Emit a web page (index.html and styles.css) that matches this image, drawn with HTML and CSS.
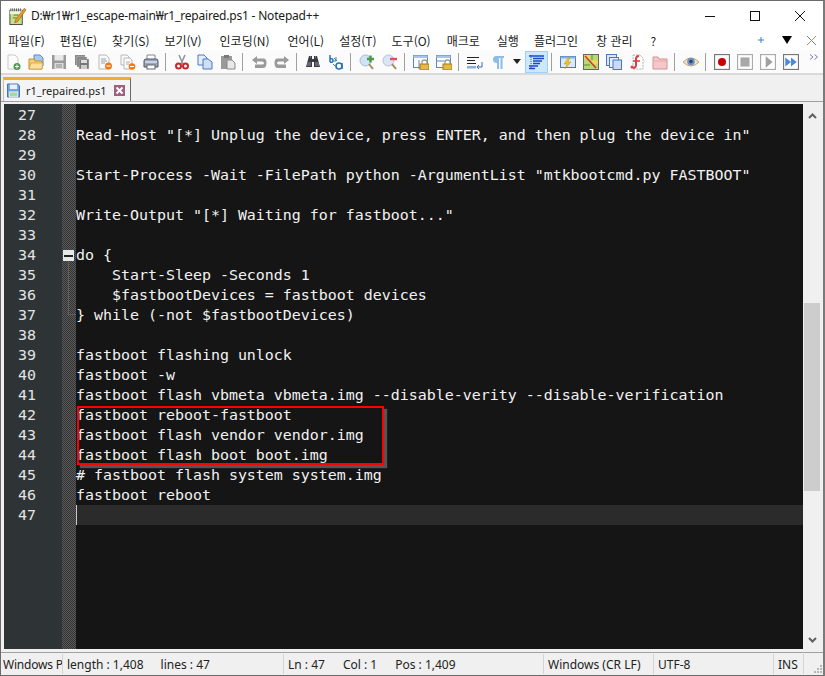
FILE: index.html
```html
<!DOCTYPE html>
<html lang="ko">
<head>
<meta charset="utf-8">
<title>r1_repaired.ps1 - Notepad++</title>
<link rel="stylesheet" href="styles.css">
</head>
<body>
<div class="win">
  <header class="titlebar">
    <svg class="appicon" viewBox="0 0 20 20"><rect x="2" y="4" width="13" height="15" fill="#c8e08c" stroke="#444"/><path d="M2 4h13v4H2z" fill="#eef5d8"/><path d="M3 2v3M5 2v3M7 2v3M9 2v3M11 2v3M13 2v3" stroke="#555"/><path d="M8 14 17 2l2 1.500L10 16l-3 1z" fill="#f0a020" stroke="#7a4a10" stroke-width=".6"/><path d="M6 9h5M5 12h4" stroke="#5a7a30"/></svg>
    <span class="title">D:₩r1₩r1_escape-main₩r1_repaired.ps1 - Notepad++</span>
    <div class="winctl">
      <svg viewBox="0 0 10 10"><path d="M0 5.500h10" stroke="#111"/></svg>
      <svg viewBox="0 0 10 10"><rect x=".5" y=".5" width="9" height="9" fill="none" stroke="#111"/></svg>
      <svg viewBox="0 0 10 10"><path d="M0 0l10 10M10 0 0 10" stroke="#111"/></svg>
    </div>
  </header>
  <nav class="menubar">
    <span>파일(F)</span><span>편집(E)</span><span>찾기(S)</span><span>보기(V)</span><span>인코딩(N)</span><span>언어(L)</span><span>설정(T)</span><span>도구(O)</span><span>매크로</span><span>실행</span><span>플러그인</span><span>창 관리</span><span>?</span>
    <div class="menuright">
      <svg viewBox="0 0 8 8"><path d="M4 1v6M1 4h6" stroke="#3a7fd0"/></svg>
      <svg viewBox="0 0 12 10"><path d="M1 1h10L6 9z" fill="#000"/></svg>
      <svg viewBox="0 0 11 11"><path d="M1 1l9 9" stroke="#4a90c8"/><path d="M10 1 1 10" stroke="#c88a50"/></svg>
    </div>
  </nav>
  <div class="toolbar">
    <button class="tb"><svg viewBox="0 0 16 16"><path d="M3 1h7l3 3v11H3z" fill="#fbfbfb" stroke="#c8c8c8"/><circle cx="12" cy="12.500" r="3.500" fill="#4a9a50"/><path d="M12 10.500v4M10 12.500h4" stroke="#fff"/></svg></button>
    <button class="tb"><svg viewBox="0 0 16 16"><path d="M6 1h6l3 3v8H6z" fill="#a8c8ee" stroke="#5a88c8"/><path d="M1 5h5l1 2h7v8H1z" fill="#f8d070" stroke="#c09030"/><path d="M1 15l2-6h12l-1 6z" fill="#fbe09a" stroke="#c09030" stroke-width=".6"/></svg></button>
    <button class="tb"><svg viewBox="0 0 16 16"><rect x="1" y="1" width="14" height="14" fill="#9a9a9a"/><rect x="3.500" y="1" width="9" height="5.500" fill="#e8e8e8"/><rect x="3.500" y="9" width="9" height="6" fill="#dcdcdc"/><path d="M5 11h6M5 13h6" stroke="#888"/></svg></button>
    <button class="tb"><svg viewBox="0 0 16 16"><rect x="1" y="1" width="10" height="10" fill="#8a8a8a"/><rect x="3" y="3" width="10" height="10" fill="#6e6e6e" stroke="#ddd" stroke-width=".5"/><rect x="5" y="5" width="10" height="10" fill="#777" stroke="#ddd" stroke-width=".5"/><rect x="7" y="6" width="6" height="3" fill="#ddd"/><rect x="7" y="11" width="6" height="4" fill="#ccc"/></svg></button>
    <button class="tb"><svg viewBox="0 0 16 16"><path d="M2 1h7l3 3v11H2z" fill="#fafafa" stroke="#b8b8b8"/><path d="M4 5h5M4 7h6M4 9h4" stroke="#a0a0a0"/><circle cx="11.500" cy="12" r="3.500" fill="#f07818"/><path d="M9.500 12h4" stroke="#fff" stroke-width="1.200"/></svg></button>
    <button class="tb"><svg viewBox="0 0 16 16"><path d="M1 1h6l2 2v8H1z" fill="#fafafa" stroke="#b8b8b8"/><path d="M4 4h6l2 2v9H4z" fill="#fafafa" stroke="#b8b8b8"/><path d="M6 8h4M6 10h3" stroke="#b0b0b0"/><circle cx="12" cy="12.500" r="3.300" fill="#f07818"/><path d="M10 12.500h4" stroke="#fff" stroke-width="1.200"/></svg></button>
    <button class="tb"><svg viewBox="0 0 16 16"><path d="M4 1h8v5H4z" fill="#fff" stroke="#7a8aa0"/><path d="M1 7q0-2 2-2h10q2 0 2 2v6H1z" fill="#9aa8b8" stroke="#556"/><rect x="2" y="7" width="12" height="2" fill="#c8d4e4"/><rect x="4" y="11" width="8" height="4" fill="#fff" stroke="#667"/></svg></button>
    <i class="sep"></i>
    <button class="tb"><svg viewBox="0 0 16 16"><path d="M11 1 7 10M5 1l4 9" stroke="#8a94a4" stroke-width="1.500"/><circle cx="4.500" cy="12" r="2.500" fill="none" stroke="#c8282c" stroke-width="2"/><circle cx="11.500" cy="12" r="2.500" fill="none" stroke="#c8282c" stroke-width="2"/></svg></button>
    <button class="tb"><svg viewBox="0 0 16 16"><path d="M1 1h6l3 3v7H1z" fill="#e4eefa" stroke="#4a78c0"/><path d="M6 5h5l4 3v7H6z" fill="#cfe0f6" stroke="#4a78c0"/></svg></button>
    <button class="tb"><svg viewBox="0 0 16 16"><rect x="1" y="2" width="11" height="13" fill="#9a9a9a"/><rect x="4" y="1" width="5" height="3" fill="#777"/><path d="M7 6h5l3 3v6H7z" fill="#e8e8e8" stroke="#888"/></svg></button>
    <i class="sep"></i>
    <button class="tb"><svg viewBox="0 0 16 16"><path d="M6 2 1 6l5 4V7.500h5q2 0 2 1.500t-2 1.500H4V14h8q3.500 0 3.500-5T12 4.500H6z" fill="#9a9a9a"/></svg></button>
    <button class="tb"><svg viewBox="0 0 16 16"><path d="M10 2l5 4-5 4V7.500H5Q3 7.500 3 9t2 1.500h7V14H4q-3.500 0-3.500-5T4 4.500h6z" fill="#9a9a9a"/></svg></button>
    <i class="sep"></i>
    <button class="tb"><svg viewBox="0 0 16 16"><path d="M4 2h3v3h2V2h3l3 11H9V8H7v5H1z" fill="#3a3a44"/><rect x="2" y="8" width="4" height="4" fill="#667"/><rect x="10" y="8" width="4" height="4" fill="#667"/><path d="M5 3h1M10 3h1" stroke="#aab"/></svg></button>
    <button class="tb"><svg viewBox="0 0 16 16"><path d="M2 1v7M2 5q3-1 3 1.500T2 8" fill="none" stroke="#2a70c0" stroke-width="1.500"/><path d="M6 4l3 3M8 3v4H5" fill="none" stroke="#3a8a9a"/><circle cx="11" cy="12" r="3" fill="none" stroke="#2a70c0" stroke-width="1.600"/><path d="M14 9v6" stroke="#2a70c0" stroke-width="1.500"/><path d="M5 10l3 3" stroke="#3a8a9a"/></svg></button>
    <i class="sep"></i>
    <button class="tb"><svg viewBox="0 0 16 16"><circle cx="6.500" cy="6.500" r="5.500" fill="#cfe2f6" stroke="#a8bcd4"/><path d="M10 10l4 5" stroke="#a88858" stroke-width="2"/><path d="M11.500 1.500v7M8 5h7" stroke="#4a9a40" stroke-width="2.400"/></svg></button>
    <button class="tb"><svg viewBox="0 0 16 16"><circle cx="6.500" cy="6.500" r="5.500" fill="#d8e6f6" stroke="#b0c0d4"/><path d="M10 10l4 5" stroke="#a88858" stroke-width="2"/><path d="M8 5h7" stroke="#e84858" stroke-width="2.400"/></svg></button>
    <i class="sep"></i>
    <button class="tb"><svg viewBox="0 0 16 16"><rect x=".5" y="1.500" width="14" height="12" fill="#fff" stroke="#5a88c4"/><rect x=".5" y="1.500" width="14" height="2.500" fill="#a8c4e8"/><path d="M6 6v9" stroke="#5a88c4"/><rect x="7" y="10" width="9" height="6" fill="#e8b840" stroke="#a87820"/><path d="M9 10V8q0-2 2.500-2T14 8v2" fill="none" stroke="#998" stroke-width="1.300"/></svg></button>
    <button class="tb"><svg viewBox="0 0 16 16"><rect x=".5" y="1.500" width="14" height="12" fill="#fff" stroke="#5a88c4"/><rect x=".5" y="1.500" width="14" height="2.500" fill="#a8c4e8"/><path d="M.5 7h8" stroke="#5a88c4"/><rect x="7" y="10" width="9" height="6" fill="#e8b840" stroke="#a87820"/><path d="M9 10V8q0-2 2.500-2T14 8v2" fill="none" stroke="#998" stroke-width="1.300"/></svg></button>
    <i class="sep"></i>
    <button class="tb"><svg viewBox="0 0 16 16"><path d="M0 3.500h12M0 6.500h8" stroke="#222"/><path d="M0 9.500h9" stroke="#222"/><rect y="12" width="9" height="2.500" fill="#8ab0e0"/><path d="M15 8v5h-4" fill="none" stroke="#3a6ab0"/><path d="M12 11l-2 2 2 2" fill="none" stroke="#3a6ab0"/></svg></button>
    <button class="tb"><svg viewBox="0 0 16 16"><path d="M6 2h8v2h-1.500v11h-2V4H9v11H7V9Q3 9 3 5.500T6 2z" fill="#8cbce8"/></svg></button>
    <button class="tb drop"><svg viewBox="0 0 8 5"><path d="M0 0h8L4 5z" fill="#222"/></svg></button>
    <button class="tb on"><svg viewBox="0 0 16 16"><path d="M2 1v14" stroke="#e02020" stroke-dasharray="1 1"/><path d="M0 2h15M4 4.500h11M4 7h9M4 9.500h7M0 12h9M0 14.500h6" stroke="#1848c8" stroke-width="1.300"/></svg></button>
    <i class="sep"></i>
    <button class="tb"><svg viewBox="0 0 16 16"><rect x=".5" y="2.500" width="15" height="11" fill="#dceaf8" stroke="#4a78b8"/><rect x=".5" y="2.500" width="15" height="2" fill="#8ab0dc"/><path d="M8 4 4 10h3l-2 5 6-7H8l2-4z" fill="#f0c030" stroke="#b88a10" stroke-width=".4"/></svg></button>
    <button class="tb"><svg viewBox="0 0 16 16"><rect x=".5" y=".5" width="15" height="15" fill="#b8d870" stroke="#666"/><path d="M1 5h6V1H1zM9 10h6V6H9z" fill="#e8d860"/><path d="M2 2l11 12" stroke="#d83030" stroke-width="1.400"/><path d="M9 1v5M1 11h6" stroke="#5a8a40"/></svg></button>
    <button class="tb"><svg viewBox="0 0 16 16"><rect x=".5" y=".5" width="10" height="11" fill="#d8e8f8" stroke="#4a78c0"/><rect x="3.500" y="3.500" width="9" height="10" fill="#e8f0fa" stroke="#4a78c0"/><rect x="7" y="6" width="8.500" height="9.500" fill="#c8dcf4" stroke="#4a78c0"/></svg></button>
    <button class="tb"><svg viewBox="0 0 16 16"><path d="M4 1h7l3 3v11H4z" fill="#fff" stroke="#b0b0b0" stroke-dasharray="2 1"/><path d="M10 2Q7 2 7 5v6q0 3-3 3" fill="none" stroke="#d84048" stroke-width="2"/><path d="M4 7h7" stroke="#d84048" stroke-width="1.600"/><circle cx="3" cy="13" r="1.500" fill="#d84048"/></svg></button>
    <button class="tb"><svg viewBox="0 0 16 16"><path d="M1 3h5l1 2h8v10H1z" fill="#f4c8c8" stroke="#d49090"/><path d="M2 7h12" stroke="#e8a8a8"/></svg></button>
    <i class="sep"></i>
    <button class="tb"><svg viewBox="0 0 16 16"><path d="M0 8q8-8 16 0-8 8-16 0z" fill="#f0e4d0" stroke="#c8a070"/><circle cx="8" cy="7.500" r="3.800" fill="#6a90c8"/><circle cx="8" cy="7.500" r="1.700" fill="#33445a"/></svg></button>
    <i class="sep"></i>
    <button class="tb"><svg viewBox="0 0 14 14"><rect x=".5" y=".5" width="13" height="13" fill="#fff" stroke="#777"/><circle cx="7" cy="7" r="3.500" fill="#c80000"/></svg></button>
    <button class="tb"><svg viewBox="0 0 14 14"><rect x=".5" y=".5" width="13" height="13" fill="#fff" stroke="#aaa"/><rect x="3" y="3" width="8" height="8" fill="#a8a8a8"/></svg></button>
    <button class="tb"><svg viewBox="0 0 14 14"><rect x=".5" y=".5" width="13" height="13" fill="#fff" stroke="#aaa"/><path d="M5 2l6 5-6 5z" fill="#a0a0a0"/></svg></button>
    <button class="tb"><svg viewBox="0 0 14 14"><rect x=".5" y=".5" width="13" height="13" fill="#fff" stroke="#777"/><path d="M2 3l5 4-5 4zM7 3l5 4-5 4z" fill="#4a88e0"/></svg></button>
    <svg class="more" viewBox="0 0 9 6"><path d="M0 .5 3 3 0 5.500M4.500 .5l3 2.500-3 2.500" fill="none" stroke="#7878b8"/></svg>
  </div>
  <div class="tabbar">
    <div class="tab">
      <svg class="tabicon" viewBox="0 0 14 15"><path d="M.5.500h11l2 2v12H.5z" fill="#6aa0e0" stroke="#3a6ab0"/><rect x="3" y="1" width="8" height="5" fill="#e8f0fa"/><rect x="2.500" y="9" width="9" height="5.500" fill="#a8d8a0" stroke="#eef"/></svg>
      <span>r1_repaired.ps1</span>
      <svg class="tabclose" viewBox="0 0 11 11"><rect width="11" height="11" fill="#a06080"/><path d="M2.500 2.500l6 6M8.500 2.500l-6 6" stroke="#fff" stroke-width="2"/></svg>
    </div>
  </div>
  <main class="frame">
    <div class="editor">
      <div class="gutter">
        <div>27</div><div>28</div><div>29</div><div>30</div><div>31</div><div>32</div><div>33</div><div>34</div><div>35</div><div>36</div><div>37</div><div>38</div><div>39</div><div>40</div><div>41</div><div>42</div><div>43</div><div>44</div><div>45</div><div>46</div><div>47</div>
      </div>
      <div class="fold">
        <div class="foldbox"></div>
        <div class="foldline"></div>
      </div>
      <div class="code">
<div class="ln"> </div>
<div class="ln">Read-Host "[*] Unplug the device, press ENTER, and then plug the device in"</div>
<div class="ln"> </div>
<div class="ln">Start-Process -Wait -FilePath python -ArgumentList "mtkbootcmd.py FASTBOOT"</div>
<div class="ln"> </div>
<div class="ln">Write-Output "[*] Waiting for fastboot..."</div>
<div class="ln"> </div>
<div class="ln">do {</div>
<div class="ln">    Start-Sleep -Seconds 1</div>
<div class="ln">    $fastbootDevices = fastboot devices</div>
<div class="ln">} while (-not $fastbootDevices)</div>
<div class="ln"> </div>
<div class="ln">fastboot flashing unlock</div>
<div class="ln">fastboot -w</div>
<div class="ln">fastboot flash vbmeta vbmeta.img --disable-verity --disable-verification</div>
<div class="ln">fastboot reboot-fastboot</div>
<div class="ln">fastboot flash vendor vendor.img</div>
<div class="ln">fastboot flash boot boot.img</div>
<div class="ln"># fastboot flash system system.img</div>
<div class="ln">fastboot reboot</div>
<div class="ln current"> </div>
        <div class="redbox"></div>
      </div>
      <div class="scrollbar">
        <svg class="arrow" viewBox="0 0 9 6"><path d="M1 5l3.500-3.500L8 5" fill="none" stroke="#606060" stroke-width="2"/></svg>
        <div class="track"><div class="thumb"></div></div>
        <svg class="arrow" viewBox="0 0 9 6"><path d="M1 1l3.500 3.500L8 1" fill="none" stroke="#606060" stroke-width="2"/></svg>
      </div>
    </div>
  </main>
  <footer class="status">
    <div class="cell c-type">Windows P</div>
    <div class="cell c-len"><span>length : 1,408</span><span>lines : 47</span></div>
    <div class="cell c-pos"><span>Ln : 47</span><span>Col : 1</span><span>Pos : 1,409</span></div>
    <div class="cell c-eol">Windows (CR LF)</div>
    <div class="cell c-enc">UTF-8</div>
    <div class="cell c-ins">INS</div>
    <div class="cell c-grip"><svg viewBox="0 0 10 10"><path d="M7 1h2v2H7zM4 4h2v2H4zM7 4h2v2H7zM1 7h2v2H1zM4 7h2v2H4zM7 7h2v2H7z" fill="#b8b8b8"/></svg></div>
  </footer>
</div>
</body>
</html>
```
FILE: styles.css
```css
* { box-sizing: border-box; }
html, body { margin: 0; padding: 0; }
body {
  width: 825px;
  height: 676px;
  overflow: hidden;
  font-family: "Noto Sans", "Noto Sans CJK KR", sans-serif;
  font-size: 12px;
  color: #1a1a1a;
}
.win {
  width: 825px;
  height: 676px;
  display: flex;
  flex-direction: column;
  background: #fff;
  border-top: 1px solid #6a6a6a;
  border-left: 1px solid #6a6a6a;
  border-right: 2px solid #7a7a7a;
  overflow: hidden;
}
.titlebar {
  height: 29px;
  display: flex;
  align-items: center;
  padding-left: 7px;
  flex: none;
}
.appicon { width: 19px; height: 20px; margin-right: 4px; flex: none; }
.title { font-size: 12px; letter-spacing: -0.19px; }
.winctl {
  margin-left: auto;
  display: flex;
  gap: 35px;
  padding-right: 18px;
}
.winctl svg { width: 10px; height: 10px; }
.menubar {
  height: 20px;
  flex: none;
  display: flex;
  align-items: center;
  gap: 15px;
  padding-left: 7px;
  font-family: "Noto Sans CJK KR", sans-serif;
  font-size: 12px;
}
.menubar > span:nth-child(5) { margin-left: 3px; }
.menubar > span:nth-child(6) { margin-left: 3px; }
.menubar > span:nth-child(9) { margin-left: 1px; }
.menubar > span:nth-child(10) { margin-left: 2px; }
.menubar > span:nth-child(12) { margin-left: 3px; }
.menubar > span:nth-child(13) { margin-left: 3px; }
.menuright {
  margin-left: auto;
  display: flex;
  align-items: center;
  padding-right: 6px;
}
.menuright svg:nth-child(1) { width: 8px; height: 8px; margin-right: 16px; }
.menuright svg:nth-child(2) { width: 12px; height: 10px; margin-right: 13px; }
.menuright svg:nth-child(3) { width: 11px; height: 11px; }
.toolbar {
  height: 25px;
  flex: none;
  display: flex;
  align-items: center;
  padding-left: 0;
  background: #fbfbfb;
  border-bottom: 2px solid #d9d9d9;
}
.tb {
  width: 23px;
  height: 22px;
  padding: 0;
  border: 1px solid transparent;
  background: none;
  display: flex;
  align-items: center;
  justify-content: center;
  flex: none;
}
.tb svg { width: 16px; height: 16px; display: block; }
.tb.drop { width: 16px; }
.tb.drop svg { width: 8px; height: 5px; }
.tb.on { background: #cce8ff; border-color: #99d1ff; }
.sep {
  width: 1px;
  height: 18px;
  margin: 0 4px 0 3px;
  background: #a0a0a0;
  flex: none;
}
.more {
  width: 9px;
  height: 6px;
  margin-left: auto;
  margin-right: 4px;
  align-self: flex-start;
  margin-top: 4px;
}
.tabbar {
  height: 26px;
  flex: none;
  background: #f0f0f0;
  padding: 2px 0 0 2px;
}
.tab {
  width: 128px;
  height: 24px;
  background: #f4f4f4;
  border-top: 3px solid #faa634;
  border-right: 1px solid #6a6a6a;
  border-left: 1px solid #c0c0c0;
  display: flex;
  align-items: center;
  padding-left: 3px;
  font-size: 11px;
}
.tabicon { width: 13px; height: 15px; margin-right: 6px; flex: none; }
.tabclose { width: 11px; height: 11px; margin-left: auto; margin-right: 5px; flex: none; }
.frame {
  flex: 1;
  min-height: 0;
  background: #f0f0f0;
  padding: 2px 1px 3px 3px;
  border-top: 1px solid #a0a0a0;
  border-bottom: 1px solid #a0a0a0;
  display: flex;
}
.editor {
  flex: 1;
  display: flex;
  min-width: 0;
  background: #151515;
  font-family: "DejaVu Sans Mono", monospace;
  font-size: 14.95px;
  line-height: 20px;
}
.gutter {
  width: 58px;
  flex: none;
  background: #2e3436;
  color: #e4e4e4;
  padding: 1px 0 0 14px;
}
.fold {
  width: 14px;
  flex: none;
  position: relative;
  background: repeating-conic-gradient(#5a5a5a 0 25%, #333 0 50%) 0 0 / 2px 2px;
}
.foldbox {
  position: absolute;
  left: 1px;
  top: 146px;
  width: 11px;
  height: 11px;
  background: linear-gradient(#e8e8e8 0 4px, #222 4px 6px, #e8e8e8 6px);
  border: 1px solid #e8e8e8;
}
.foldline {
  position: absolute;
  left: 6px;
  top: 157px;
  width: 8px;
  height: 54px;
  border-left: 1px solid #5f5f5f;
  border-bottom: 1px solid #5f5f5f;
}
.code {
  flex: 1;
  min-width: 0;
  position: relative;
  padding-top: 1px;
  color: #f2f2f2;
}
.ln {
  height: 20px;
  white-space: pre;
}
.current {
  background: #2b2b2b;
  border-left: 1px solid #c8c8c8;
}
.redbox {
  position: absolute;
  left: 1px;
  top: 302px;
  width: 307px;
  height: 59px;
  border: 2px solid #f00;
  box-shadow: 3px 3px 1px #555;
}
.scrollbar {
  width: 19px;
  flex: none;
  background: #f0f0f0;
  display: flex;
  flex-direction: column;
  align-items: center;
  padding: 9px 0 6px;
}
.arrow { width: 9px; height: 6px; flex: none; }
.track { flex: 1; width: 100%; padding: 0 2px 0 1px; }
.thumb { height: 188px; margin-top: 184px; background: #cdcdcd; }
.status {
  height: 23px;
  flex: none;
  display: flex;
  align-items: center;
  background: #f0f0f0;
  border-bottom: 1px solid #6a6a6a;
  font-size: 12px;
  color: #222;
}
.cell {
  height: 20px;
  display: flex;
  align-items: center;
  white-space: nowrap;
  overflow: hidden;
  border-right: 1px solid #d4d4d4;
  padding-left: 2px;
  flex: none;
}
.c-type { width: 62px; letter-spacing: -0.2px; }
.c-len { width: 221px; padding-left: 4px; gap: 17px; }
.c-pos { width: 260px; padding-left: 4px; gap: 18px; }
.c-eol { width: 110px; padding-left: 4px; }
.c-enc { width: 120px; padding-left: 4px; }
.c-ins { width: 30px; padding-left: 4px; }
.c-grip { width: 19px; border-right: 0; justify-content: flex-end; align-items: flex-end; padding: 0; }
.c-grip svg { width: 10px; height: 10px; }
```
